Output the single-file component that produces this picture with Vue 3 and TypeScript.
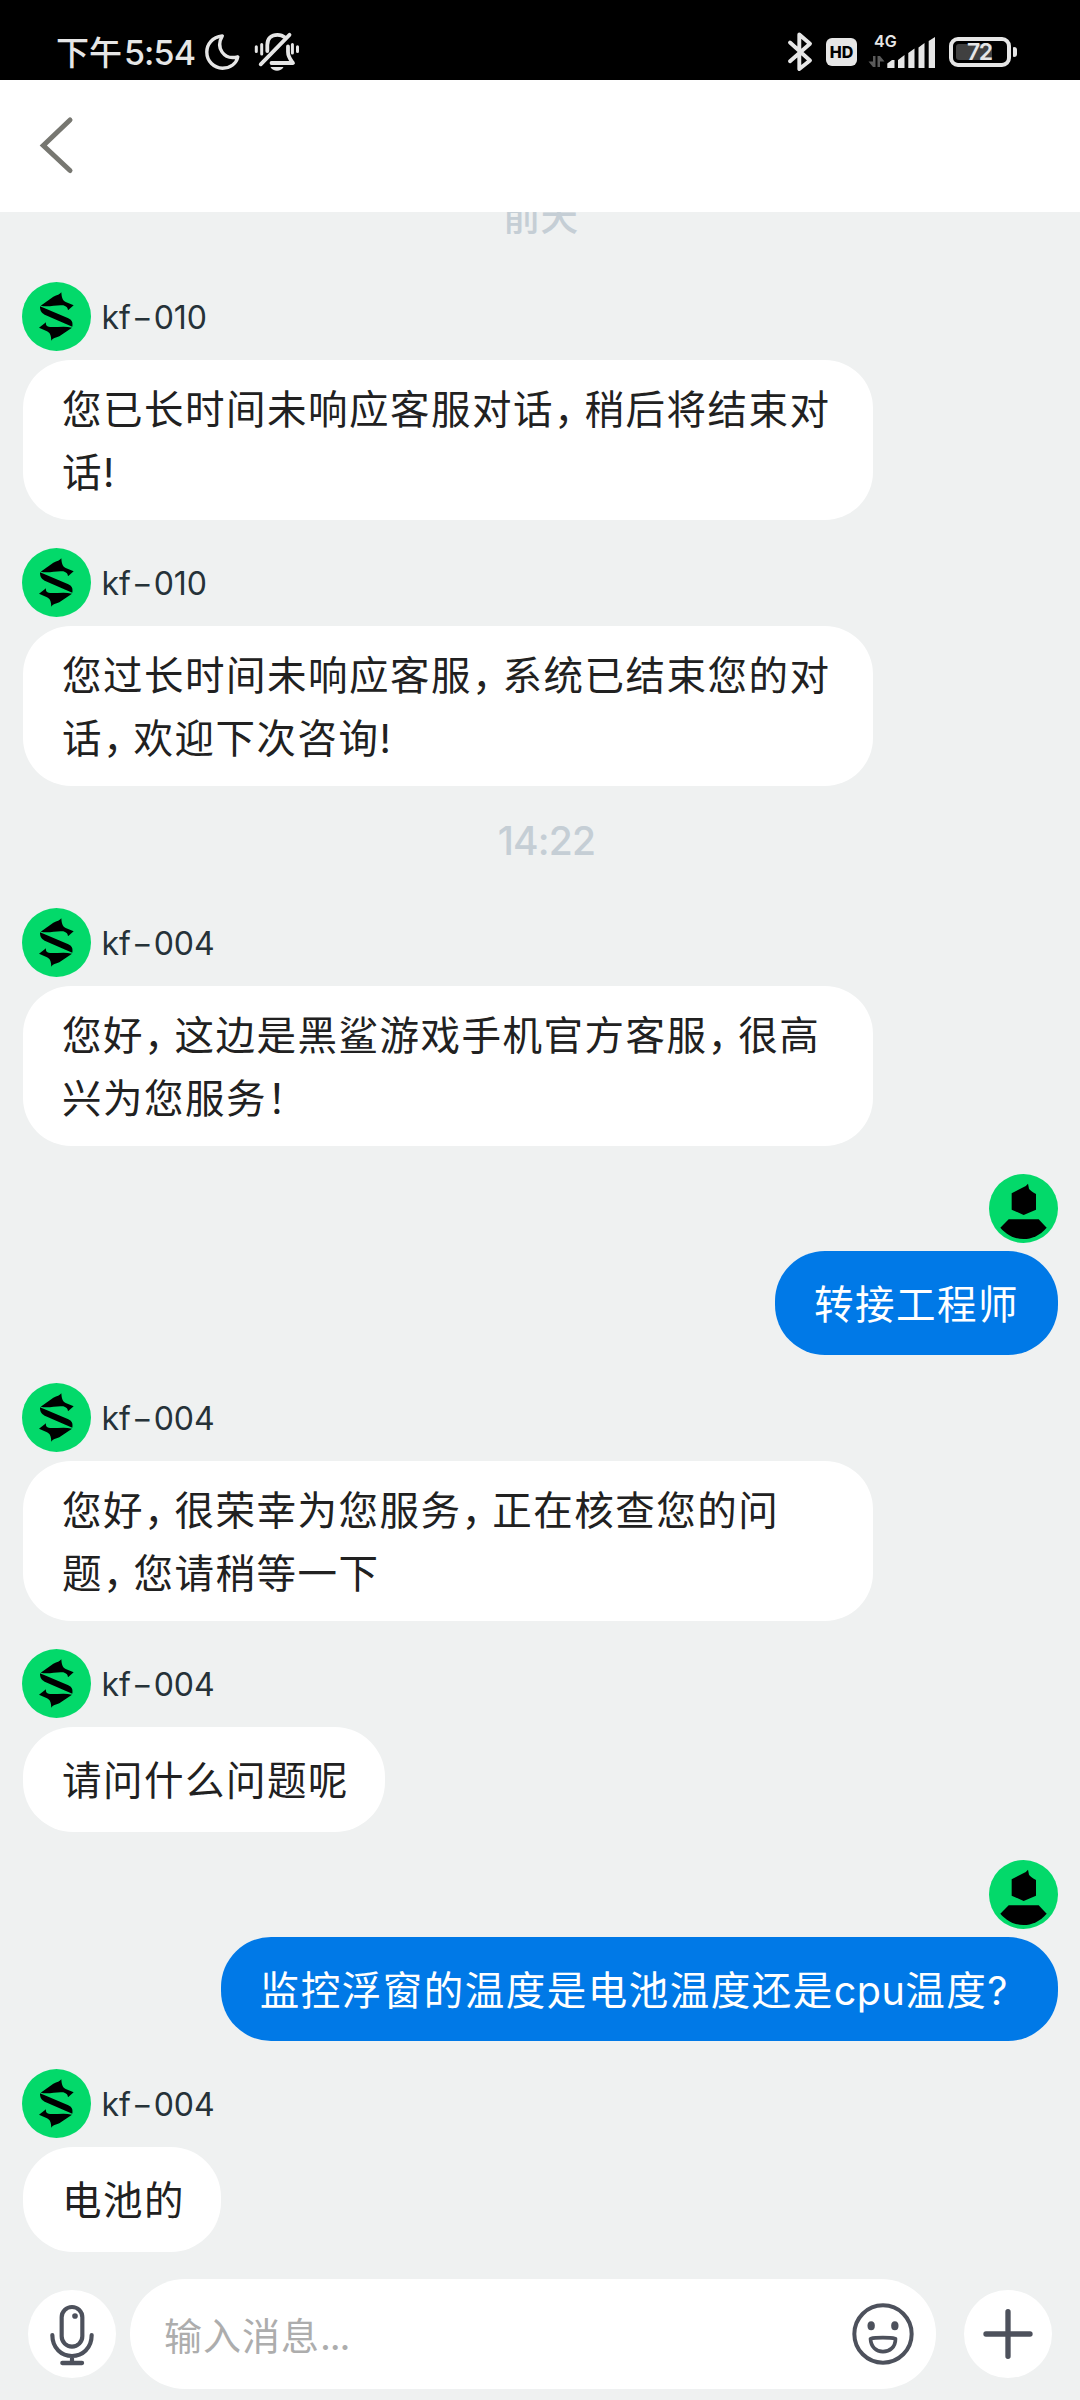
<script setup lang="ts">
interface ChatMessage {
  kind: 'in' | 'out' | 'time'
  name?: string
  lines: string[]
}

const messages: ChatMessage[] = [
  { kind: 'in', name: 'kf-010', lines: ['您已长时间未响应客服对话，稍后将结束对', '话!'] },
  { kind: 'in', name: 'kf-010', lines: ['您过长时间未响应客服，系统已结束您的对', '话，欢迎下次咨询!'] },
  { kind: 'time', lines: ['14:22'] },
  { kind: 'in', name: 'kf-004', lines: ['您好，这边是黑鲨游戏手机官方客服，很高', '兴为您服务！'] },
  { kind: 'out', lines: ['转接工程师'] },
  { kind: 'in', name: 'kf-004', lines: ['您好，很荣幸为您服务，正在核查您的问', '题，您请稍等一下'] },
  { kind: 'in', name: 'kf-004', lines: ['请问什么问题呢'] },
  { kind: 'out', lines: ['监控浮窗的温度是电池温度还是cpu温度?'] },
  { kind: 'in', name: 'kf-004', lines: ['电池的'] },
]

// Commas, latin words and question marks have their own advance widths.
const segments = (line: string): string[] => line.split(/(，|[a-z]+|\?)/).filter((s) => s.length > 0)

const segmentClass = (s: string): string => {
  if (s === '，') return 'comma'
  if (s === '?') return 'question'
  return /^[a-z]+$/.test(s) ? 'latin' : ''
}
</script>

<template>
  <div class="screen">
    <div class="status">
      <span class="clock">下午<b>5:54</b></span>
      <svg class="moon" width="38" height="40" viewBox="203 32 38 40" fill="none" stroke="#e6e6e6" stroke-width="3.400" stroke-linejoin="round">
        <path d="M222.3 36C212 37 206.8 44.5 206.8 52C206.8 61.2 214 68.2 222.5 68.2C230.5 68.2 236.5 63.5 237.8 56.8C223.500 60.500 215.500 47.500 222.300 36Z" />
      </svg>
      <svg class="bell" width="48" height="44" viewBox="253 31 48 44" fill="none" stroke="#e6e6e6" stroke-width="3.800" stroke-linecap="round" stroke-linejoin="round">
        <path d="M267.300 52V46C267.300 39.500 271.500 35.800 277.500 35.800C280.500 35.800 283 36.800 284.500 38.200M288 47.500V53C288 58 290.500 60.500 293 64H271.500M289.500 35.800L260.700 65.300" />
        <path d="M256.300 47.800V52.500M261.700 45.500V55M292.400 45.500V54M297.500 47.800V52.500" stroke-width="3" />
        <path d="M270.500 68H283.500C281 73 273 73 270.500 68Z" fill="#e6e6e6" stroke="none" />
      </svg>
      <span class="spacer"></span>
      <svg width="26" height="42" viewBox="787 31 26 42" fill="none" stroke="#e6e6e6" stroke-width="3.900" stroke-linecap="round" stroke-linejoin="round">
        <path d="M790 42.500L810 60.500L799.300 69V34.500L810 43.800L790 61.300" />
      </svg>
      <span class="hd">HD</span>
      <span class="net">
        <span class="gen">4G</span>
        <svg width="68" height="32" viewBox="868 36 68 32">
          <path d="M873 56H875.500V67H873L868.500 61.500H873ZM877.500 67V56H880L884.500 61.500H880V67Z" fill="#5a5a5a" />
          <path d="M887.300 65V63.500L892 60H894.500V68H887.300ZM898 60L904.500 55V68H898ZM908.300 53L914.500 48.500V68H908.300ZM918.500 47.500L924.500 43V68H918.500ZM928.700 41L935 37V68H928.700Z" fill="#e6e6e6" />
        </svg>
      </span>
      <span class="battery"><i class="level"></i><em>72</em></span>
      <i class="knob"></i>
    </div>

    <div class="header">
      <svg width="36" height="60" viewBox="39 116 36 60" fill="none" stroke="#777771" stroke-width="5" stroke-linecap="round">
        <path d="M70 120L43.300 145.500L70 170.500" />
      </svg>
    </div>

    <div class="chat">
      <div class="day">前天</div>
      <template v-for="(m, i) in messages" :key="i">
        <div v-if="m.kind === 'time'" class="time">{{ m.lines[0] }}</div>
        <div v-else class="msg" :class="m.kind">
          <div class="who">
            <svg v-if="m.kind === 'in'" class="avatar" viewBox="66 66 207 207">
              <circle cx="169.500" cy="169.500" r="103.500" fill="#03d96a" />
              <path d="M122 137L160 110C171 106 180 103 184 97C185 112 187 121 197 126L221 136L204 151C204 144 200 139 190 136C170 133 145 143 122 137Z" />
              <path d="M120 139L205 175C215 180 219 186 217 200L134 164C122 158 120 150 120 139Z" />
              <path d="M216 203L178 229C167 233 158 235 154 242C153 227 151 219 141 214L117 203L138 187C136 195 140 200 150 201C172 202 194 197 216 203Z" />
            </svg>
            <svg v-else class="avatar" viewBox="747 72 207 207">
              <circle cx="850.500" cy="175.500" r="103.500" fill="#03d96a" />
              <path d="M815 130L850 112Q859 108 864 101L867 116Q870 122 888 132V179L851 195L815 179Z" />
              <path d="M806 208H896L920 233C899 257 875 267 851 267C827 267 802 257 781 233Z" />
            </svg>
            <span v-if="m.name" class="name">{{ m.name.split('-')[0] }}<i>-</i>{{ m.name.split('-')[1] }}</span>
          </div>
          <div class="bubble" :class="{ wide: m.lines.length > 1 }">
            <div v-for="(l, j) in m.lines" :key="j" class="line"><span v-for="(s, k) in segments(l)" :key="k" :class="segmentClass(s)">{{ s }}</span></div>
          </div>
        </div>
      </template>
    </div>

    <div class="footer">
      <div class="round">
        <svg width="88" height="88" viewBox="84 750 264 264" fill="none" stroke="#4d515c" stroke-width="12.500" stroke-linecap="round">
          <rect x="185" y="801" width="62" height="119" rx="31" />
          <path d="M157 885C157 925 185 948 216 948C247 948 275 925 275 885M216 948V968" />
          <path d="M187 969H246" stroke-width="13" />
          <circle cx="225" cy="828" r="8.500" fill="#4d515c" stroke="none" />
        </svg>
      </div>
      <div class="input">
        <span class="placeholder">输入消息<i>...</i></span>
        <svg width="62" height="62" viewBox="217.500 187 186 186" fill="none" stroke="#4d515c">
          <circle cx="310.500" cy="280" r="86" stroke-width="12" />
          <ellipse cx="275" cy="255" rx="11" ry="13.500" fill="#4d515c" stroke="none" />
          <ellipse cx="346" cy="255" rx="11" ry="13.500" fill="#4d515c" stroke="none" />
          <path d="M273 294C290 290 330 290 348 294C348 320 330 333 310.500 333C290 333 274 319 273 294Z" stroke-width="11" stroke-linejoin="round" />
        </svg>
      </div>
      <div class="round">
        <svg width="88" height="88" viewBox="552 150 264 264" fill="none" stroke="#4d515c" stroke-width="16" stroke-linecap="round">
          <path d="M618 282H750M684 215V349" />
        </svg>
      </div>
    </div>
  </div>
</template>

<style>
body {
  margin: 0;
  background: #eff1f1;
}
</style>

<style scoped>
.screen {
  display: flex;
  flex-direction: column;
  width: 1080px;
  height: 2400px;
  overflow: hidden;
  background: #eff1f1;
  font-family: Inter, "Noto Sans CJK SC", sans-serif;
}
.screen svg {
  display: block;
  flex: none;
}
.status {
  display: flex;
  align-items: center;
  flex: none;
  height: 80px;
  padding: 24px 63px 0 56px;
  box-sizing: border-box;
  background: #000;
  color: #e6e6e6;
}
.clock {
  width: 147px;
  padding-top: 2px;
  font-size: 33px;
  font-weight: 500;
  line-height: 40px;
  white-space: nowrap;
}
.clock b {
  margin-left: 2px;
  font-size: 34px;
  font-weight: 500;
  letter-spacing: -0.9px;
}
.bell {
  margin-left: 12px;
}
.spacer {
  flex: 1;
}
.hd {
  width: 31px;
  height: 28px;
  margin-left: 13px;
  border-radius: 6px;
  background: #e6e6e6;
  color: #000;
  font-size: 16px;
  font-weight: 800;
  line-height: 28px;
  text-align: center;
}
.net {
  position: relative;
  margin-left: 11px;
}
.gen {
  position: absolute;
  left: 6px;
  top: -5px;
  font-size: 16px;
  font-weight: 600;
  line-height: 20px;
}
.battery {
  position: relative;
  width: 62px;
  height: 30px;
  margin-left: 13px;
  box-sizing: border-box;
  border: 4px solid #e6e6e6;
  border-radius: 9px;
}
.level {
  position: absolute;
  left: 3px;
  top: 3px;
  width: 36px;
  height: 16px;
  border-radius: 3px;
  background: #404040;
}
.battery em {
  position: absolute;
  left: 14px;
  top: -1px;
  font-size: 23px;
  font-style: normal;
  font-weight: 600;
  line-height: 24px;
  letter-spacing: -1.5px;
}
.knob {
  width: 4px;
  height: 10px;
  margin-left: 2px;
  border-radius: 1px 3px 3px 1px;
  background: #e6e6e6;
}
.header {
  display: flex;
  align-items: center;
  flex: none;
  height: 132px;
  padding-left: 39px;
  background: #fff;
}
.chat {
  flex: none;
  height: 2067px;
  overflow: hidden;
}
.day {
  height: 40px;
  margin: -15px 0 45px;
  padding-left: 1px;
  color: #c5ced5;
  font-size: 37.5px;
  font-weight: 500;
  line-height: 40px;
  text-align: center;
}
.time {
  height: 94px;
  padding-left: 13px;
  color: #c5ced5;
  font-size: 39px;
  font-weight: 500;
  line-height: 54px;
  letter-spacing: -0.8px;
  text-align: center;
}
.msg {
  display: flex;
  flex-direction: column;
  align-items: flex-start;
  margin-bottom: 28px;
  padding: 0 22px;
}
.msg.out {
  align-items: flex-end;
}
.who {
  display: flex;
  align-items: center;
  height: 69px;
}
.avatar {
  width: 69px;
  height: 69px;
}
.name {
  margin-left: 10.5px;
  padding-top: 2px;
  color: #263238;
  font-size: 32px;
  line-height: 40px;
}
.name i {
  display: inline-block;
  margin: 0 4px;
  font-style: normal;
  transform: scaleX(1.4);
}
.bubble {
  box-sizing: border-box;
  height: 105px;
  margin: 9px 0 0 1px;
  padding: 23px 36px 0 39px;
  border-radius: 50px;
  background: #fff;
  color: #212121;
  font-size: 39.5px;
  line-height: 63px;
  letter-spacing: 1.5px;
  white-space: nowrap;
}
.bubble.wide {
  width: 850px;
  height: 160px;
  padding-top: 19px;
  border-radius: 48px;
}
.out .bubble {
  height: 104px;
  margin: 8px 0 0;
  padding: 23px 39px 0;
  background: #0079e7;
  color: #fff;
}
.comma {
  font-family: "Noto Sans CJK SC", sans-serif;
  font-feature-settings: "halt";
  line-height: 0;
  letter-spacing: 10.8px;
}
.latin {
  letter-spacing: 0.5px;
}
.question {
  margin-right: 10px;
}
.footer {
  display: flex;
  align-items: center;
  flex: none;
  height: 110px;
  padding: 0 28px;
}
.round {
  width: 88px;
  height: 88px;
  border-radius: 50%;
  background: #fff;
}
.input {
  display: flex;
  align-items: center;
  justify-content: space-between;
  width: 806px;
  height: 110px;
  margin: 0 28px 0 14px;
  padding: 0 22px 0 34px;
  box-sizing: border-box;
  border-radius: 55px;
  background: #fff;
}
.placeholder {
  padding-bottom: 2px;
  color: #adadad;
  font-size: 38px;
  letter-spacing: 1px;
}
.placeholder i {
  font-style: normal;
  letter-spacing: -1.2px;
}
</style>
